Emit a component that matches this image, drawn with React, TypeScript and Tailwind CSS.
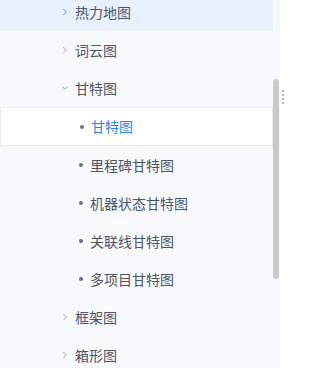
import { ChevronDown, ChevronRight } from "lucide-react";

type Item = { label: string; open?: boolean; hover?: boolean; children?: { label: string; active?: boolean }[] };

const items: Item[] = [
  { label: "热力地图", hover: true },
  { label: "词云图" },
  {
    label: "甘特图",
    open: true,
    children: [
      { label: "甘特图", active: true },
      { label: "里程碑甘特图" },
      { label: "机器状态甘特图" },
      { label: "关联线甘特图" },
      { label: "多项目甘特图" },
    ],
  },
  { label: "框架图" },
  { label: "箱形图" },
];

export default function App() {
  return (
    <div
      className="flex w-[324px] h-[368px] overflow-hidden bg-white text-[14px]"
      style={{ fontFamily: '"Noto Sans CJK SC", "Noto Sans", sans-serif' }}
    >
      <aside className="relative w-[280px] h-full shrink-0 overflow-hidden bg-[#f7f9fd]">
        <ul className="-mt-[7px] w-[273px]">
          {items.map((it) => (
            <li key={it.label}>
              <div
                className={`flex items-center h-[38px] pl-[60px] ${it.hover ? "bg-[#e9f0fc]" : ""}`}
              >
                {it.open ? (
                  <ChevronDown className="w-[10px] h-[10px] text-[#8a93a3]" strokeWidth={2} />
                ) : (
                  <ChevronRight
                    className={`w-[10px] h-[10px] ${it.hover ? "text-[#2f86e8]" : "text-[#8a93a3]"}`}
                    strokeWidth={2}
                  />
                )}
                <span className="ml-[5px] text-[#4d5566]">{it.label}</span>
              </div>
              {it.open && it.children ? (
                <ul>
                  {it.children.map((c) => (
                    <li
                      key={c.label}
                      className={`flex items-center pl-[79px] ${
                        c.active
                          ? "h-[39px] bg-white border border-[#ebedf0]"
                          : "h-[38px]"
                      }`}
                    >
                      <span className="w-[4px] h-[4px] rounded-full bg-[#6b7280]" />
                      <span
                        className={`ml-[7px] ${c.active ? "text-[#2b87e6]" : "text-[#4d5566]"}`}
                      >
                        {c.label}
                      </span>
                    </li>
                  ))}
                </ul>
              ) : null}
            </li>
          ))}
        </ul>
        <div className="absolute left-[273px] top-[79px] w-[6px] h-[200px] rounded-full bg-[#c9c9c9]" />
      </aside>
      <div className="flex flex-col gap-[2px] pl-[2px] pt-[90px]">
        {[0, 1, 2, 3].map((i) => (
          <span key={i} className="w-[2px] h-[2px] bg-[#a9b5c7]" />
        ))}
      </div>
    </div>
  );
}
